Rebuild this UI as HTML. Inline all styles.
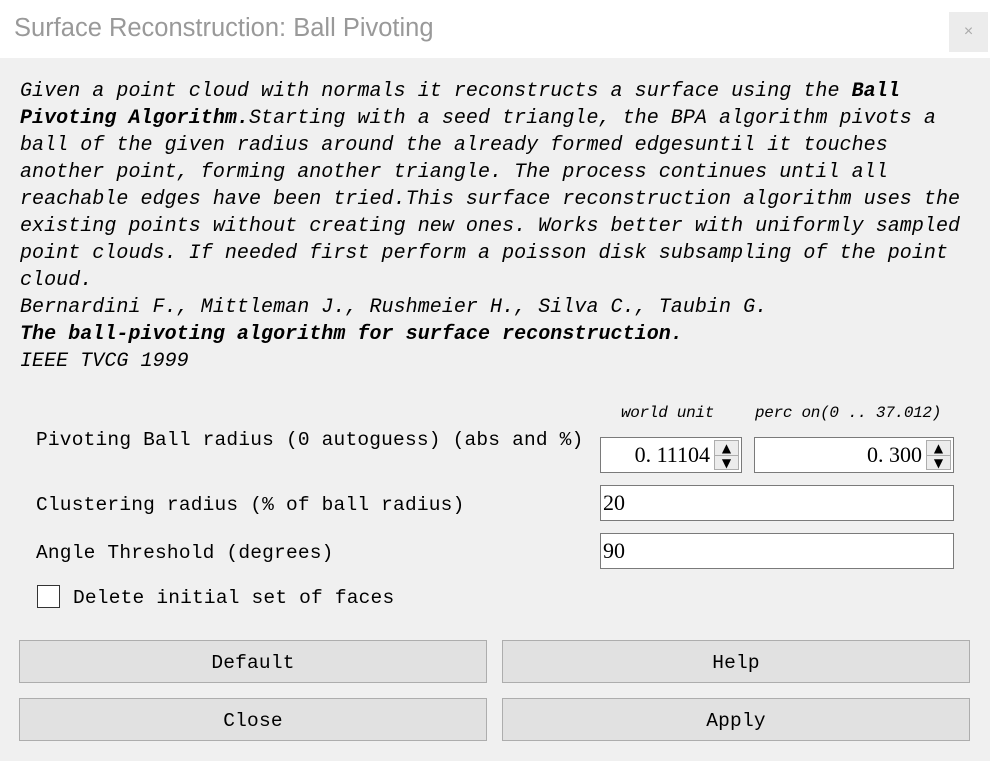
<!DOCTYPE html>
<html><head><style>
body{margin:0;width:990px;height:761px;background:#f0f0f0;position:relative;overflow:hidden;font-family:"Liberation Mono","Noto Sans CJK SC",monospace;color:#000}
.t{position:absolute;top:0;left:0;width:990px;height:58px;background:#fff}
.tt{position:absolute;left:14px;top:14px;font:25.5px "Liberation Sans",sans-serif;color:#999}
.x{position:absolute;left:949px;top:12px;width:39px;height:40px;background:#ececec;color:#aaa;font:16px "Liberation Sans";text-align:center;line-height:40px}
.d{position:absolute;left:20px;top:78px;font-size:20px;font-style:italic;line-height:27px;white-space:pre;letter-spacing:0.05px}
.l{position:absolute;font-size:19.5px;white-space:pre;letter-spacing:0.2px}
.s{position:absolute;font-size:16px;font-style:italic;white-space:pre;letter-spacing:-0.3px}
.i{position:absolute;background:#fff;border:1px solid #7a7a7a;box-sizing:border-box;font:22px "Liberation Serif",serif;line-height:33px}
.sp{position:absolute;right:2px;top:2px;width:25px;height:30px;background:#ececec;border:1px solid #adadad;box-sizing:border-box}
.sp div{height:14px;border-bottom:1px solid #adadad;font-size:12px;text-align:center;line-height:14px;font-family:"DejaVu Sans"}
.b{position:absolute;width:468px;height:43px;background:#e1e1e1;border:1px solid #adadad;box-sizing:border-box;text-align:center;line-height:45px;font-size:19.5px;letter-spacing:0.2px}
</style></head><body>
<div class="t"><div class="tt">Surface Reconstruction: Ball Pivoting</div><div class="x">×</div></div>
<div class="d">Given a point cloud with normals it reconstructs a surface using the <b>Ball
Pivoting Algorithm.</b>Starting with a seed triangle, the BPA algorithm pivots a
ball of the given radius around the already formed edgesuntil it touches
another point, forming another triangle. The process continues until all
reachable edges have been tried.This surface reconstruction algorithm uses the
existing points without creating new ones. Works better with uniformly sampled
point clouds. If needed first perform a poisson disk subsampling of the point
cloud.
Bernardini F., Mittleman J., Rushmeier H., Silva C., Taubin G.
<b>The ball-pivoting algorithm for surface reconstruction.</b>
IEEE TVCG 1999</div>
<div class="s" style="left:621px;top:404px">world unit</div>
<div class="s" style="left:755px;top:404px">perc on(0 .. 37.012)</div>
<div class="l" style="left:36px;top:429px">Pivoting Ball radius (0 autoguess) (abs and %)</div>
<div class="i" style="left:600px;top:437px;width:142px;height:36px;text-align:right;padding-right:31px">0. 11104<div class="sp"><div>▲</div><div style="border:0">▼</div></div></div>
<div class="i" style="left:754px;top:437px;width:200px;height:36px;text-align:right;padding-right:31px">0. 300<div class="sp"><div>▲</div><div style="border:0">▼</div></div></div>
<div class="l" style="left:36px;top:494px">Clustering radius (% of ball radius)</div>
<div class="i" style="left:600px;top:485px;width:354px;height:36px;padding-left:2px">20</div>
<div class="l" style="left:36px;top:542px">Angle Threshold (degrees)</div>
<div class="i" style="left:600px;top:533px;width:354px;height:36px;padding-left:2px">90</div>
<div style="position:absolute;left:37px;top:585px;width:23px;height:23px;background:#fff;border:1px solid #333;box-sizing:border-box"></div>
<div class="l" style="left:73px;top:587px">Delete initial set of faces</div>
<div class="b" style="left:19px;top:640px">Default</div>
<div class="b" style="left:502px;top:640px">Help</div>
<div class="b" style="left:19px;top:698px">Close</div>
<div class="b" style="left:502px;top:698px">Apply</div>
</body></html>
